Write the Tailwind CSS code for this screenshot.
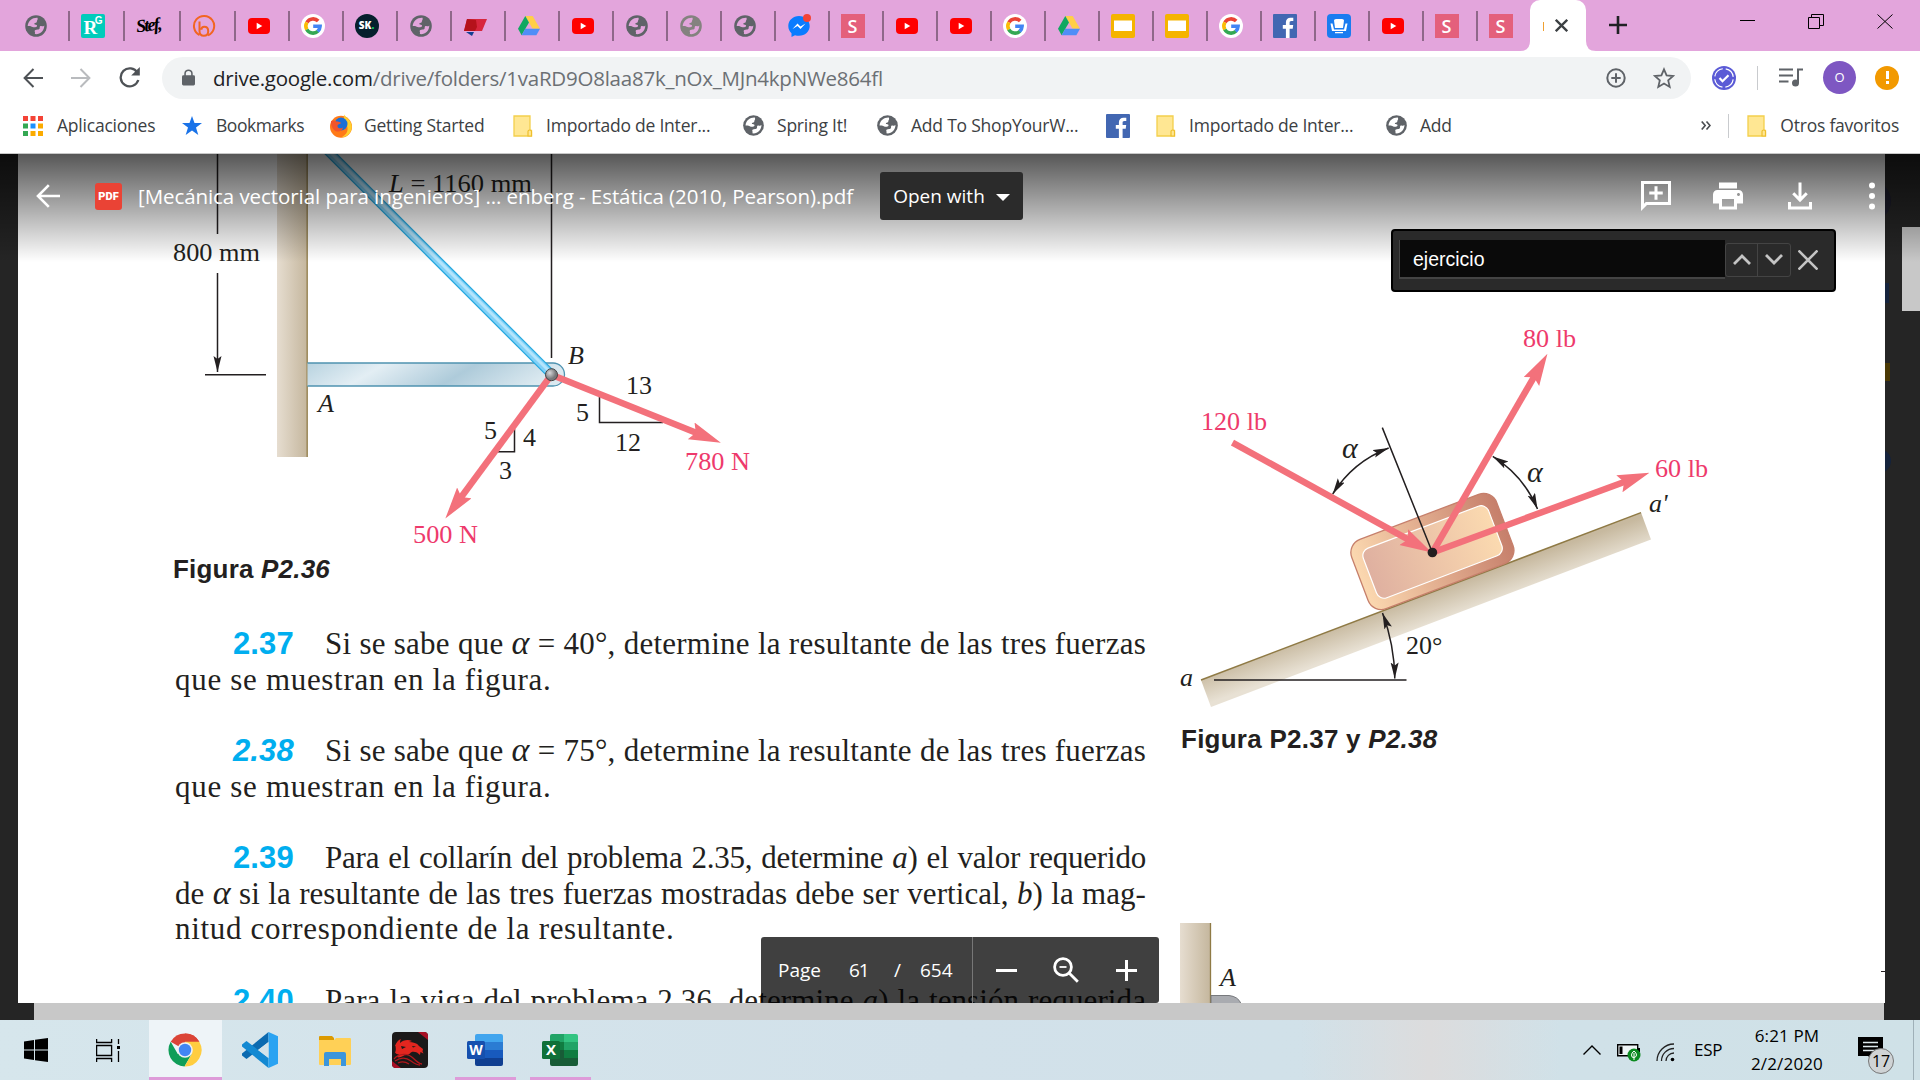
<!DOCTYPE html>
<html lang="es">
<head>
  <meta charset="UTF-8" />
  <meta name="viewport" content="width=device-width, initial-scale=1.0">
  <title>[Mecánica vectorial para ingenieros] - Google Drive</title>
  <script src="https://cdn.jsdelivr.net/npm/@tailwindcss/browser@4"></script>
</head>
<body class="w-[1920px] h-[1080px] overflow-hidden flex flex-col bg-[#252525] font-['Open_Sans','Noto_Sans',sans-serif]">

  <!-- Shared icons -->
  <svg class="hidden">
    <symbol id="globe" viewBox="0 0 24 24">
      <circle cx="12" cy="12" r="10.800" fill="currentColor" />
      <path d="M13.500 3.800C8.500 3.500 4 7 3.700 12c2.500-.2 3.500.3 4.800 1 1.500.6 3.800.5 4.500-.7.5-1.200-.8-1.600-2-1.800-1-.2-.9-1.300.1-1.500 1.200-.2 1.800-.5 1.800-1.800.1-1.200 1.300-1.200.6-3.400z" fill="#e3a5dc" />
      <path d="M20.300 11.500c-1 1-2 .9-3 .6-1-.2-1.800.5-1.600 1.600.2 1-.8 1.800-2 1.900-1.800.1-3.300.5-3 1.800.4 1 .5 1.700 0 2.700 5 .9 9.600-3.200 9.600-8.600z" fill="#e3a5dc" />
    </symbol>
    <symbol id="globew" viewBox="0 0 24 24">
      <circle cx="12" cy="12" r="10.800" fill="#5f6368" />
      <path d="M13.500 3.800C8.500 3.500 4 7 3.700 12c2.500-.2 3.500.3 4.800 1 1.500.6 3.800.5 4.500-.7.5-1.200-.8-1.600-2-1.800-1-.2-.9-1.300.1-1.500 1.200-.2 1.800-.5 1.800-1.800.1-1.200 1.300-1.200.6-3.400z" fill="#fff" />
      <path d="M20.300 11.500c-1 1-2 .9-3 .6-1-.2-1.800.5-1.600 1.600.2 1-.8 1.800-2 1.900-1.800.1-3.300.5-3 1.800.4 1 .5 1.700 0 2.700 5 .9 9.600-3.200 9.600-8.600z" fill="#fff" />
    </symbol>
    <symbol id="youtube" viewBox="0 0 24 24">
      <rect x="1" y="4" width="22" height="16" rx="4" fill="#f00" />
      <path d="M9.700 8.800v6.400l5.600-3.200z" fill="#fff" />
    </symbol>
    <symbol id="google" viewBox="0 0 24 24">
      <circle cx="12" cy="12" r="12" fill="#fff" />
      <g fill="none" stroke-width="3.600">
        <path d="M5.900 8.400A7.100 7.100 0 0 1 17.200 7.100" stroke="#ea4335" />
        <path d="M5.800 15.500A7.100 7.100 0 0 1 5.900 8.400" stroke="#fbbc05" />
        <path d="M16.900 17.200A7.100 7.100 0 0 1 5.800 15.500" stroke="#34a853" />
        <path d="M12.200 12.200h6.900a7.100 7.100 0 0 1-2.400 5.100" stroke="#4285f4" />
      </g>
    </symbol>
    <symbol id="drive" viewBox="0 0 24 24">
      <path d="M8.300 2h7.400l7.300 12.700h-7.400z" fill="#ffcf48" />
      <path d="M8.300 2l3.700 6.400-7.400 12.800L1 14.700z" fill="#11a861" />
      <path d="M8.300 14.700H23l-3.600 6.500H4.600z" fill="#4f8ef7" />
    </symbol>
    <symbol id="slides" viewBox="0 0 24 24">
      <rect width="24" height="24" rx="2" fill="#f5b400" />
      <rect x="3" y="6.500" width="18" height="10.500" fill="#fff" />
    </symbol>
    <symbol id="facebook" viewBox="0 0 24 24">
      <rect width="24" height="24" rx="1" fill="#4267b2" />
      <path d="M16.600 24v-9.300h3.100l.5-3.600h-3.600V8.800c0-1 .3-1.800 1.800-1.800h1.900V3.800c-.3 0-1.500-.1-2.800-.1-2.800 0-4.600 1.700-4.600 4.700v2.700H9.800v3.600h3.100V24z" fill="#fff" />
    </symbol>
    <symbol id="folder" viewBox="0 0 20 24">
      <path d="M1 2h16v14.500h1.500V22H1z" fill="#ffe793" stroke="#f3cf4c" stroke-width="1.300" />
      <path d="M15 22v-4.500q0-1.500 1.700-1.500T18.500 17.500V22z" fill="#ffe793" stroke="#eebf2c" stroke-width="1.200" />
    </symbol>
  </svg>

  <!-- Tab strip -->
  <div class="h-[51px] shrink-0 bg-[#e3a5dc] flex items-stretch text-[#5f6368]">
    <div class="w-[69.500px] pl-[24px] flex items-center relative"><svg class="size-6"><use href="#globe" /></svg><i class="absolute right-0 top-[11px] h-[30px] w-[1.500px] bg-[#8f688a]"></i></div>
    <div class="w-[55px] pl-[11px] flex items-center relative">
      <div class="size-6 bg-[#00ccbb] rounded-xs text-white font-bold font-['Liberation_Serif',serif] text-[19px] leading-[27px] pl-[3px] relative">R<span class="absolute right-[2px] top-[1px] text-[10px] leading-[12px] font-['Liberation_Sans',sans-serif]">G</span></div>
      <i class="absolute right-0 top-[11px] h-[30px] w-[1.500px] bg-[#8f688a]"></i>
    </div>
    <div class="w-[56px] pl-[11px] flex items-center relative"><span class="text-black italic text-[18px] tracking-[-1.800px] font-semibold font-['Liberation_Serif',serif] -rotate-6">Stef,</span><i class="absolute right-0 top-[11px] h-[30px] w-[1.500px] bg-[#8f688a]"></i></div>
    <div class="w-[55px] pl-[11px] flex items-center relative">
      <svg class="size-6" viewBox="0 0 24 24" fill="none" stroke="#f26522" stroke-width="2"><path d="M7.500 21A10.100 10.100 0 1 1 16 21.300" /><path d="M7.500 7.500V17c0 3 1.500 4.800 4.300 4.800 2.800 0 4.400-2 4.400-4.600s-1.600-4.400-4-4.400c-1.600 0-2.800 1-2.800 3" /></svg>
      <i class="absolute right-0 top-[11px] h-[30px] w-[1.500px] bg-[#8f688a]"></i>
    </div>
    <div id="tabs" class="flex"></div>
    <div class="w-[52.500px] pl-[11px] flex items-center"><div class="size-6 bg-[#e4607c] text-white font-semibold text-[18px] leading-6 text-center">S</div></div>
    <!-- Active tab -->
    <div class="w-[56px] bg-white rounded-t-[10px] flex items-center relative pl-[13px] gap-[11px]">
      <svg class="absolute -left-[10px] bottom-0 size-[10px]" viewBox="0 0 10 10"><path d="M10 0v10H0Q10 10 10 0z" fill="#fff" /></svg>
      <svg class="absolute -right-[10px] bottom-0 size-[10px]" viewBox="0 0 10 10"><path d="M0 0v10h10Q0 10 0 0z" fill="#fff" /></svg>
      <span class="w-px h-[9px] mt-[2px] bg-[#f0a030]"></span>
      <svg class="size-[13px]" viewBox="0 0 13 13" stroke="#3c4043" stroke-width="2.300"><path d="M.8.800l11.400 11.400M12.200.800L.8 12.200" /></svg>
    </div>
    <svg class="size-[18px] ml-[23px] mt-[16px]" viewBox="0 0 18 18" stroke="#202124" stroke-width="2.600"><path d="M9 0v18M0 9h18" /></svg>
    <div class="flex ml-[113px] mt-[14px] gap-[53px]">
      <svg class="w-[15px] h-[15px]" viewBox="0 0 15 15" stroke="#000" stroke-width="1"><path d="M0 6.500h15" /></svg>
      <svg class="w-[16px] h-[15px]" viewBox="0 0 16 15" stroke="#000" fill="none"><path d="M.5 3.500h11v11H.5zM3.500 3V.500h12v11H12" /></svg>
      <svg class="w-[16px] h-[15px]" viewBox="0 0 16 15" stroke="#000"><path d="M.5.500l15 14M15.500.500l-15 14" /></svg>
    </div>
  </div>

  <!-- Address bar -->
  <div class="h-[53px] shrink-0 bg-white flex items-center text-[#5f6368]">
    <div class="flex items-center w-[162px] pl-[23px] gap-[28px]">
      <svg class="size-[20px]" viewBox="0 0 20 20" fill="none" stroke="#4e5256" stroke-width="2"><path d="M20 10H2M10.500 1L1.600 10l8.900 9" /></svg>
      <svg class="size-[20px]" viewBox="0 0 20 20" fill="none" stroke="#b9bbbe" stroke-width="2"><path d="M0 10h18M9.500 1l8.900 9-8.900 9" /></svg>
      <svg class="size-[21px]" viewBox="0 0 21 21" fill="none" stroke="#4e5256" stroke-width="2.300"><path d="M18.500 5.800A9 9 0 1 0 19.300 13" /><path d="M20.800 0v8.600h-8.600z" fill="#4e5256" stroke="none" /></svg>
    </div>
    <div class="w-[1529px] h-[42px] rounded-full bg-[#f1f3f4] flex items-center pl-[20px]">
      <svg class="w-[13px] h-[17px]" viewBox="0 0 14 17"><rect y="6" width="14" height="11" rx="1.500" fill="#5f6368" /><path d="M3.300 7V4.300a3.700 3.700 0 0 1 7.400 0V7" fill="none" stroke="#5f6368" stroke-width="1.700" /></svg>
      <div class="ml-[18px] pt-px text-[20.500px] tracking-[-0.230px] text-[#6c7074] whitespace-nowrap"><span class="text-[#202124]">drive.google.com</span>/drive/folders/1vaRD9O8laa87k_nOx_MJn4kpNWe864fl</div>
      <svg class="size-[20px] ml-auto" viewBox="0 0 20 20" fill="none" stroke="#5f6368" stroke-width="2"><circle cx="10" cy="10" r="8.700" /><path d="M10 5.300v9.400M5.300 10h9.400" /></svg>
      <svg class="size-[22px] ml-[27px] mr-[16px]" viewBox="0 0 22 22" fill="none" stroke="#5f6368" stroke-width="1.800"><path d="M11 2.300l2.600 6.100 6.600.6-5 4.400 1.500 6.500-5.700-3.400-5.700 3.400 1.500-6.500-5-4.400 6.600-.6z" /></svg>
    </div>
    <svg class="size-6 ml-[21px]" viewBox="0 0 24 24"><circle cx="12" cy="12" r="12" fill="#5b5bd6" /><circle cx="12" cy="12" r="9.300" fill="none" stroke="#fff" stroke-width="1.200" stroke-dasharray="11.600 3" stroke-dashoffset="-1.500" /><path d="M7.500 12l3 3.200 6-6" fill="none" stroke="#fff" stroke-width="2.200" /></svg>
    <i class="w-px h-6 bg-[#c9cbce] ml-[21px]"></i>
    <svg class="w-[24px] h-[19px] ml-[21px]" viewBox="0 0 24 19" stroke="#5f6368" stroke-width="2" fill="none"><path d="M0 1.500h14M0 7.500h14M0 13.500h9.500M19 15V1.500h5" /><circle cx="16.500" cy="15" r="3.500" fill="#5f6368" stroke="none" /></svg>
    <div class="size-[33px] rounded-full bg-[#7e57c2] text-white text-[13px] leading-[32px] text-center ml-[20px]">O</div>
    <div class="size-6 rounded-full bg-[#f29900] ml-[19px] flex flex-col items-center justify-center gap-[2px]"><i class="w-[3px] h-[8px] bg-white"></i><i class="size-[3px] bg-white"></i></div>
  </div>

  <!-- Bookmarks bar -->
  <div class="h-[50px] shrink-0 bg-white border-b border-[#c8c8c8] flex items-center pl-[23px] pb-[6px] text-[17.500px] tracking-[-0.220px] text-[#3c4043] whitespace-nowrap">
    <div class="w-[159px] flex items-center gap-[14px]">
      <svg class="size-[20px]" viewBox="0 0 20 20"><path d="M0 0h5v5H0zM7.500 0h5v5h-5zM15 0h5v5h-5z" fill="#f44336" /><path d="M0 7.500h5v5H0zM0 15h5v5H0z" fill="#34a853" /><path d="M7.500 7.500h5v5h-5z" fill="#1a90ff" /><path d="M15 7.500h5v5h-5zM7.500 15h5v5h-5zM15 15h5v5h-5z" fill="#fbab00" /></svg>
      <span>Aplicaciones</span>
    </div>
    <div class="w-[147px] flex items-center gap-[14px]">
      <svg class="size-[20px]" viewBox="0 0 20 20"><path d="M10 0l2.500 7H20l-6 4.600L16.300 19 10 14.500 3.700 19 6 11.600 0 7h7.500z" fill="#1a73e8" /></svg>
      <span class="tracking-[-0.450px]">Bookmarks</span>
    </div>
    <div class="w-[184px] flex items-center gap-[11px]">
      <svg class="size-6" viewBox="0 0 24 24"><circle cx="12" cy="12.800" r="11" fill="#ff7a18" /><path d="M15 .5c1 3 7 4.500 7.800 11.500.4 6-4.300 11.300-10.300 11.300 4-2 6.500-5 6-9.300C18 9 14 6 15 .5z" fill="#ffd02e" /><circle cx="12" cy="10" r="6.500" fill="#1b6fd6" /><path d="M2 7c2-1 4-.5 5.500.5 2 0 3.500.5 4.500 1.500-1 1.500-3.500 1-3.500 3 0 2.500 3 3 5.500 1.500-.5 3-3 4.500-6 4S1.500 13 2 7z" fill="#f2552b" /></svg>
      <span>Getting Started</span>
    </div>
    <div class="w-[229px] flex items-center gap-[13px]"><svg class="w-[20px] h-[24px]"><use href="#folder" /></svg><span>Importado de Inter...</span></div>
    <div class="w-[134px] flex items-center gap-[12px]"><svg class="size-[23px]"><use href="#globew" /></svg><span>Spring It!</span></div>
    <div class="w-[230px] flex items-center gap-[12px]"><svg class="size-[23px]"><use href="#globew" /></svg><span>Add To ShopYourW...</span></div>
    <div class="w-[50px]"><svg class="size-6"><use href="#facebook" /></svg></div>
    <div class="w-[229px] flex items-center gap-[13px]"><svg class="w-[20px] h-[24px]"><use href="#folder" /></svg><span>Importado de Inter...</span></div>
    <div class="flex items-center gap-[12px]"><svg class="size-[23px]"><use href="#globew" /></svg><span>Add</span></div>
    <div class="ml-auto flex items-center mr-[21px]">
      <svg class="w-[10px] h-[9px]" viewBox="0 0 10 9" fill="none" stroke="#4a4d51" stroke-width="1.600"><path d="M.7.500l3.500 4-3.500 4M5.500.500l3.500 4-3.500 4" /></svg>
      <i class="w-px h-6 bg-[#c9cbce] ml-[17px]"></i>
      <svg class="w-[20px] h-[24px] ml-[18px] mr-[13px]"><use href="#folder" /></svg>
      <span>Otros favoritos</span>
    </div>
  </div>

  <!-- PDF viewer -->
  <main class="h-[866px] shrink-0 relative bg-[#252525] overflow-hidden">
    <div class="ml-[18px] w-[1867px] h-[849px] bg-white flex overflow-hidden text-[#231f20]">

      <!-- Left column -->
      <div class="w-[1147px] shrink-0">
        <svg class="block w-[1147px] h-[400px]" viewBox="18 154 1147 400" font-family="Liberation Serif, serif" font-size="26" fill="#231f20">
          <defs>
            <linearGradient id="wall"><stop offset="0" stop-color="#e6ddd0" /><stop offset="1" stop-color="#c5b79e" /></linearGradient>
            <linearGradient id="beam" x2="1" y2=".15"><stop offset="0" stop-color="#b8d3e0" /><stop offset=".3" stop-color="#e3eef4" /><stop offset=".65" stop-color="#aecbda" /><stop offset="1" stop-color="#dbe9f0" /></linearGradient>
            <radialGradient id="pin" cx=".35" cy=".35"><stop offset="0" stop-color="#d8d8da" /><stop offset="1" stop-color="#77787b" /></radialGradient>
            <marker id="force" markerUnits="userSpaceOnUse" markerWidth="32" markerHeight="20" refX="8" refY="9" orient="auto"><path d="M0 0L32 9 0 18 5 9z" fill="#f3717b" /></marker>
            <marker id="tip" markerUnits="userSpaceOnUse" markerWidth="18" markerHeight="10" refX="16" refY="4" orient="auto-start-reverse"><path d="M0 0L16 4 0 8 3 4z" fill="#231f20" /></marker>
          </defs>
          <g stroke="#231f20" stroke-width="1.500" fill="none">
            <path d="M217.500 154v80M551.500 154v204" />
            <path d="M217.500 273v99" marker-end="url(#tip)" />
            <path d="M205 374.700h61" />
          </g>
          <rect x="277" y="154" width="30" height="303" fill="url(#wall)" />
          <path d="M307.200 154v303" stroke="#8f7a45" stroke-width="1.300" />
          <path d="M307.500 363H553a11.500 11.500 0 0 1 0 23H307.500" fill="url(#beam)" stroke="#4f93b0" stroke-width="1.300" />
          <path d="M311 134L551 374" stroke="#25a8de" stroke-width="9.500" />
          <path d="M311 134L551 374" stroke="#7fd0f7" stroke-width="7" />
          <path d="M311.500 133.500L551.500 373.500" stroke="#b4e5fc" stroke-width="3" />
          <g stroke="#231f20" stroke-width="1.500" fill="none">
            <path d="M599.500 396v26.500H663" />
            <path d="M514.500 429v22.700H497" />
          </g>
          <g stroke="#f3717b" stroke-width="6.500">
            <path d="M551.500 374.700L698.600 433.800" marker-end="url(#force)" />
            <path d="M551.500 374.700L459.600 499.300" marker-end="url(#force)" />
          </g>
          <circle cx="551.500" cy="374.700" r="6" fill="url(#pin)" stroke="#444" stroke-width="1" />
          <text x="173" y="261" textLength="87" lengthAdjust="spacingAndGlyphs">800 mm</text>
          <text x="389" y="192" textLength="143" lengthAdjust="spacingAndGlyphs"><tspan font-style="italic">L</tspan> = 1160 mm</text>
          <text x="568" y="364" font-style="italic">B</text>
          <text x="318" y="412" font-style="italic">A</text>
          <text x="626" y="394">13</text>
          <text x="576" y="421">5</text>
          <text x="615" y="451">12</text>
          <text x="484" y="439">5</text>
          <text x="523" y="446">4</text>
          <text x="499" y="479">3</text>
          <g fill="#ee3a6c">
            <text x="685" y="470" textLength="65" lengthAdjust="spacingAndGlyphs">780 N</text>
            <text x="413" y="543" textLength="65" lengthAdjust="spacingAndGlyphs">500 N</text>
          </g>
        </svg>
        <p class="pl-[155px] h-[30px] leading-[30px] text-[26px] font-bold tracking-[0.200px] font-['Liberation_Sans',sans-serif]">Figura <i>P2.36</i></p>

        <div class="ml-[157px] mt-[42px] w-[971px] font-['Liberation_Serif',serif] text-[31px] leading-[35.650px] tracking-[0.250px] whitespace-nowrap">
          <div class="flex pl-[58px]"><b class="w-[92px] shrink-0 tracking-[0.100px] text-[#00aeef] font-['Liberation_Sans',sans-serif]">2.37</b><span class="flex-1 [text-align-last:justify]">Si se sabe que <i class="text-[34px] leading-none">α</i> = 40°, determine la resultante de las tres fuerzas</span></div>
          <div class="mb-[35.650px] tracking-[0.690px]">que se muestran en la figura.</div>
          <div class="flex pl-[58px]"><b class="w-[92px] shrink-0 tracking-[0.100px] italic text-[#00aeef] font-['Liberation_Sans',sans-serif]">2.38</b><span class="flex-1 [text-align-last:justify]">Si se sabe que <i class="text-[34px] leading-none">α</i> = 75°, determine la resultante de las tres fuerzas</span></div>
          <div class="mb-[35.650px] tracking-[0.690px]">que se muestran en la figura.</div>
          <div class="flex pl-[58px] tracking-[-0.200px]"><b class="w-[92px] shrink-0 tracking-[0.100px] text-[#00aeef] font-['Liberation_Sans',sans-serif]">2.39</b><span class="flex-1 [text-align-last:justify]">Para el collarín del problema 2.35, determine <i>a</i>) el valor requerido</span></div>
          <div class="[text-align-last:justify] tracking-[0.050px]">de <i class="text-[34px] leading-none">α</i> si la resultante de las tres fuerzas mostradas debe ser vertical, <i>b</i>) la mag-</div>
          <div class="mb-[35.650px] tracking-[0.690px]">nitud correspondiente de la resultante.</div>
          <div class="flex pl-[58px] tracking-[0.100px]"><b class="w-[92px] shrink-0 text-[#00aeef] font-['Liberation_Sans',sans-serif]">2.40</b><span class="flex-1 [text-align-last:justify]">Para la viga del problema 2.36, determine <i>a</i>) la tensión requerida</span></div>
        </div>
      </div>

      <!-- Right column -->
      <div class="w-[720px] shrink-0">
        <svg class="block w-[720px] h-[570px]" viewBox="1165 154 720 570" font-family="Liberation Serif, serif" font-size="26" fill="#231f20">
          <defs>
            <linearGradient id="ramp" gradientUnits="userSpaceOnUse" x1="1421" y1="596" x2="1431" y2="624"><stop offset="0" stop-color="#c7b99f" /><stop offset="1" stop-color="#e8e1d4" /></linearGradient>
            <linearGradient id="block"><stop offset="0" stop-color="#fbd8b0" /><stop offset="1" stop-color="#c67f6b" /></linearGradient>
            <linearGradient id="face"><stop offset="0" stop-color="#dfb0a0" /><stop offset="1" stop-color="#fbdab0" /></linearGradient>
          </defs>
          <path d="M1201 680L1641 512.600 1651 539.500 1211 707z" fill="url(#ramp)" />
          <path d="M1201 680L1641 512.600" stroke="#8f7a45" stroke-width="1.500" />
          <g transform="translate(1432.400 551.500) rotate(-20.800)">
            <rect x="-77.500" y="-37" width="155" height="74" rx="14" fill="url(#block)" stroke="#c67f6b" stroke-width="1.300" />
            <rect x="-67" y="-26" width="134" height="53" rx="8" fill="url(#face)" stroke="#fff" stroke-width="1.200" />
          </g>
          <g stroke="#231f20" stroke-width="1.500" fill="none">
            <path d="M1214 680h192.500M1432.400 552.500L1382.300 427.600" />
            <path d="M1332.700 494A114 114 0 0 1 1388.700 448" marker-start="url(#tip)" marker-end="url(#tip)" />
            <path d="M1492.800 456.400A114 114 0 0 1 1537.500 509" marker-start="url(#tip)" marker-end="url(#tip)" />
            <path d="M1382.500 613A193 193 0 0 1 1394.800 678.500" marker-start="url(#tip)" marker-end="url(#tip)" />
          </g>
          <g stroke="#f3717b" stroke-width="6.500">
            <path d="M1432.400 552.500L1535.400 374.600" marker-end="url(#force)" />
            <path d="M1432.400 552.500L1626.900 481" marker-end="url(#force)" />
            <path d="M1232.500 442.600L1410.700 540.900" marker-end="url(#force)" />
          </g>
          <circle cx="1432.400" cy="552.500" r="4.800" />
          <g fill="#ee3a6c">
            <text x="1523" y="347" textLength="53" lengthAdjust="spacingAndGlyphs">80 lb</text>
            <text x="1201" y="430" textLength="66" lengthAdjust="spacingAndGlyphs">120 lb</text>
            <text x="1655" y="477" textLength="53" lengthAdjust="spacingAndGlyphs">60 lb</text>
          </g>
          <text x="1342" y="458" font-style="italic" font-size="30">α</text>
          <text x="1527" y="482" font-style="italic" font-size="30">α</text>
          <text x="1649" y="512" font-style="italic">a'</text>
          <text x="1180" y="686" font-style="italic">a</text>
          <text x="1406" y="653.500">20°</text>
        </svg>
        <p class="pl-[16px] h-[30px] leading-[30px] text-[26px] font-bold tracking-[0.250px] font-['Liberation_Sans',sans-serif]">Figura P2.37 y <i>P2.38</i></p>
        <svg class="block w-[720px] h-[249px]" viewBox="1165 754 720 249" font-family="Liberation Serif, serif" font-size="26" fill="#231f20">
          <rect x="1180" y="923" width="30" height="80" fill="url(#wall)" />
          <path d="M1210.500 923v80" stroke="#8f7a45" stroke-width="1.300" />
          <path d="M1211 995.500h18q9 1 12 8h-30z" fill="#a9abb0" stroke="#77797d" />
          <text x="1220" y="986" font-style="italic">A</text>
          <path d="M1881 971.500h4" stroke="#231f20" />
        </svg>
      </div>
    </div>

    <div class="ml-[34px] w-[1850px] h-[17px] bg-[#c8c8c8]"></div>
    <div class="absolute right-0 top-[73px] w-[18px] h-[84px] bg-[#c8c8c8]"></div>

    <!-- Dimmed Drive side panel -->
    <div class="absolute left-[1885px] top-0 w-[7px] h-[600px] overflow-hidden">
      <i class="absolute -left-[34px] top-[27px] size-[40px] rounded-full bg-[#1c1c2c]"></i>
      <i class="absolute left-0 top-[129px] w-[4px] h-[20px] bg-[#15233c]"></i>
      <i class="absolute left-0 top-[209px] w-[5px] h-[18px] bg-[#4a3905]"></i>
      <i class="absolute -left-[18px] top-[295px] size-[24px] rounded-full bg-[#15233c]"></i>
    </div>

    <!-- Viewer header -->
    <header class="absolute inset-x-0 top-0 h-[108px] bg-linear-to-b from-black/66 to-black/0">
      <div class="h-[84px] flex items-center text-white">
        <svg class="w-[24px] h-[24px] ml-[36px]" viewBox="0 0 24 24" fill="none" stroke="#fff" stroke-width="2.600"><path d="M24 12H2.500M12.800 1.200L2 12l10.800 10.800" /></svg>
        <div class="size-[27px] ml-[35px] rounded-[3px] bg-[#ea4335] text-[11px] font-black leading-[27px] text-center font-['Roboto',sans-serif]">PDF</div>
        <div class="ml-[16px] w-[742px] text-[20.500px] tracking-[-0.070px] whitespace-nowrap font-['Open_Sans',sans-serif]">[Mecánica vectorial para ingenieros] ... enberg - Estática (2010, Pearson).pdf</div>
        <div class="w-[143px] h-[48px] shrink-0 rounded-[3px] bg-[#2b2b2b] flex items-center justify-center gap-[11px] text-[19px] font-medium whitespace-nowrap">Open with <svg class="w-[14px] h-[7px] mt-[3px]" viewBox="0 0 14 7"><path d="M0 0h14L7 7z" fill="#fff" /></svg></div>
        <div class="ml-auto mr-[30px] flex items-center gap-[36px]">
          <svg class="size-9" viewBox="0 0 24 24" fill="#fff"><path d="M2 2h20v16H6l-4 4zM4 4v13.200L5.200 16H20V4zM11 5.500h2V9h3.500v2H13v3.500h-2V11H7.500V9H11z" fill-rule="evenodd" /></svg>
          <svg class="size-9" viewBox="0 0 24 24" fill="#fff"><path d="M19 8H5c-1.660 0-3 1.340-3 3v6h4v4h12v-4h4v-6c0-1.660-1.340-3-3-3zm-3 11H8v-5h8v5zm3-7c-.550 0-1-.450-1-1s.450-1 1-1 1 .450 1 1-.450 1-1 1zm-1-9H6v4h12V3z" /></svg>
          <svg class="size-9" viewBox="0 0 24 24" fill="none" stroke="#fff" stroke-width="2"><path d="M12 3v11M7.500 10.200L12 14.700l4.500-4.500M5 16v4h14v-4" /></svg>
          <svg class="size-9" viewBox="0 0 24 24" fill="#fff"><circle cx="12" cy="5" r="2" /><circle cx="12" cy="12" r="2" /><circle cx="12" cy="19" r="2" /></svg>
        </div>
      </div>
    </header>

    <!-- Find box -->
    <div class="absolute left-[1391px] top-[75px] w-[445px] h-[63px] rounded-[4px] border-2 border-black bg-[#2a2a2a] flex items-center pl-[6px] pb-[2px]">
      <div class="w-[326px] h-[39px] bg-[#0a0a0a] border-l border-b-2 border-[#444] text-white text-[19.500px] leading-[39px] pl-[13px] font-['Liberation_Sans',sans-serif]">ejercicio</div>
      <div class="flex h-[34px] rounded-[3px] border border-[#444] divide-x divide-[#444]">
        <span class="w-[32px] flex items-center justify-center"><svg class="w-[18px] h-[11px]" viewBox="0 0 18 11" fill="none" stroke="#c4c4c4" stroke-width="2.800"><path d="M1 10l8-8 8 8" /></svg></span>
        <span class="w-[32px] flex items-center justify-center"><svg class="w-[18px] h-[11px]" viewBox="0 0 18 11" fill="none" stroke="#c4c4c4" stroke-width="2.800"><path d="M1 1l8 8 8-8" /></svg></span>
      </div>
      <svg class="size-[20px] ml-[7px]" viewBox="0 0 20 20" stroke="#c4c4c4" stroke-width="2.600"><path d="M.5.500l19 19M19.500.500l-19 19" /></svg>
    </div>

    <!-- Page controls -->
    <div class="absolute left-[761px] top-[783px] w-[398px] h-[66px] rounded-[3px] bg-black/75 text-white text-[19px] flex items-stretch">
      <div class="w-[212px] flex items-center border-r border-[#777] font-medium">
        <span class="ml-[17px] w-[71px]">Page</span><span class="w-[45px] tracking-[-1px]">61</span><span class="w-[26px]">/</span><span>654</span>
      </div>
      <div class="flex items-center pl-[23px] gap-[36px]">
        <svg class="w-[21px] h-[21px]" viewBox="0 0 21 21" stroke="#fff" stroke-width="3"><path d="M0 10.500h21" /></svg>
        <svg class="w-[26px] h-[26px]" viewBox="0 0 26 26" fill="none" stroke="#fff" stroke-width="2.800"><circle cx="10" cy="10" r="8.400" /><path d="M15.800 15.800l9 9" /><path d="M6.500 10h7" stroke-width="1.800" /></svg>
        <svg class="w-[21px] h-[21px] ml-px" viewBox="0 0 21 21" stroke="#fff" stroke-width="3"><path d="M0 10.500h21M10.500 0v21" /></svg>
      </div>
    </div>
  </main>

  <!-- Taskbar -->
  <footer class="h-[60px] shrink-0 flex items-center bg-linear-to-r from-[#d6e6ec] via-[#d2e1ea] to-[#cfe1e7] text-black relative">
    <div class="absolute left-[1300px] top-0 w-[260px] h-full bg-linear-to-r from-[#dcdcdd]/0 via-[#dcdcdd] to-[#dcdcdd]/0"></div>
    <div class="w-[149px] flex items-center pl-[24px] gap-[48px]">
      <svg class="size-6" viewBox="0 0 24 24"><path d="M0 3.500L10 2v9.500H0zM11 1.800L24 0v11.500H11zM0 12.500h10V22L0 20.500zM11 12.500h13V24l-13-1.800z" /></svg>
      <svg class="w-[24px] h-[23px]" viewBox="0 0 24 23" fill="none" stroke="#000" stroke-width="1.300"><path d="M.6 0v3.500h15V0M.6 23v-3.500h15V23M.6 6.500h15v10H.6zM22.500 0v5M22.500 12v11" /><path d="M21 7h3v3h-3z" fill="#000" stroke="none" /></svg>
    </div>
    <div class="w-[73px] h-full bg-[#eef4f8] border-b-[3px] border-[#de9bd9] flex items-center justify-center pt-[2px] pr-[2px]">
      <svg class="size-[34px]" viewBox="0 0 34 34">
        <path d="M17 17L2.700 8.700A16.500 16.500 0 0 1 31.300 8.700z" fill="#db4437" />
        <path d="M17 .5a16.500 16.500 0 0 1 14.300 8.200H17z" fill="#db4437" />
        <path d="M2.700 8.700A16.500 16.500 0 0 0 16.500 33.500l7.200-12.600L17 17 9.800 21z" fill="#0f9d58" />
        <path d="M31.300 8.700A16.500 16.500 0 0 1 16.500 33.500l7.300-12.600L17 17V8.700z" fill="#ffcd40" />
        <circle cx="17" cy="17" r="7.800" fill="#f1f1f1" /><circle cx="17" cy="17" r="6.200" fill="#4285f4" />
      </svg>
    </div>
    <svg class="size-9 ml-[20px]" viewBox="0 0 36 36"><path d="M26.500 0v10L4.500 27 0 23.500v-2z" fill="#0b6ab0" /><path d="M0 14.500v-2L4.500 9l22 17v10z" fill="#1389d2" /><path d="M26.500 0L36 4.300v27.400L26.500 36z" fill="#2aa3f2" /><path d="M26.500 10v16L16 18z" fill="#d3e3ea" /></svg>
    <svg class="w-[32px] h-[31px] ml-[41px]" viewBox="0 0 32 31"><path d="M0 5V2q0-1 1-1h12l2 2v2z" fill="#dc9a00" /><path d="M0 5h15l2-2h14q1 0 1 1v25q0 1-1 1H1q-1 0-1-1z" fill="#ffd056" /><path d="M5 31V19q0-2 2-2h18q2 0 2 2v12h-5v-7H10v7z" fill="#3c96dc" /></svg>
    <svg class="size-9 ml-[41px]" viewBox="0 0 36 36"><rect width="36" height="36" rx="4" fill="#1b1919" /><path d="M26 0h6q4 0 4 4v4zM0 29l9 7H4q-4 0-4-4z" fill="#a80f24" /><path d="M3 14c1-3 3-6 6-7-1 2-1 3-1 4 3-3 8-4 12-2l-3 1c4 0 8 1 10 4l4 3-.5 2.500 1 2-3-1.500-.5 3-3-2.500c-3-1-6-1-7 1-2 2-5 1-7 2.500-2 1-4 2-6 1l2-2.500c-2 0-3-1-4-2 1-2 1-3 .5-6.500z" fill="#e3261f" /><path d="M9 14l5 1-4 2zM20 14l4 .5-3 1z" fill="#1b1919" /><path d="M2 27c5-6 14-6 19-1 4 4 6 6 9 6M3 29c6-4 12-3 16 0 4 3 6 4 9 4M6 31c4-2 8-1 11 1" fill="none" stroke="#b5181c" stroke-width="1.300" /></svg>
    <div class="ml-[27px] w-[61px] h-full border-b-[3px] border-[#de9bd9] flex items-center pl-[12px] pt-[3px]">
      <svg class="w-[36px] h-[32px]" viewBox="0 0 36 32"><path d="M8 2q0-2 2-2h24q2 0 2 2v6H8z" fill="#41a5ee" /><path d="M8 8h28v8H8z" fill="#2b7cd3" /><path d="M8 16h28v8H8z" fill="#185abd" /><path d="M8 24h28v6q0 2-2 2H10q-2 0-2-2z" fill="#103f91" /><rect y="7" width="18" height="18" rx="1.500" fill="#1650ae" /><text x="9" y="21" font-size="14" font-weight="700" text-anchor="middle" fill="#fff" font-family="Open Sans">W</text></svg>
    </div>
    <div class="ml-[14px] w-[61px] h-full border-b-[3px] border-[#de9bd9] flex items-center pl-[12px] pt-[3px]">
      <svg class="w-[36px] h-[32px]" viewBox="0 0 36 32"><path d="M8 2q0-2 2-2h12v8H8z" fill="#21a366" /><path d="M22 0h12q2 0 2 2v6H22z" fill="#33c481" /><path d="M8 8h14v8H8z" fill="#107c41" /><path d="M22 8h14v8H22z" fill="#21a366" /><path d="M22 16h14v8H22z" fill="#107c41" /><path d="M8 16h14v8h14v6q0 2-2 2H10q-2 0-2-2z" fill="#185c37" /><rect y="7" width="18" height="18" rx="1.500" fill="#0f7038" /><text x="9" y="21" font-size="15" font-weight="700" text-anchor="middle" fill="#fff" font-family="Open Sans">X</text></svg>
    </div>
    <!-- System tray -->
    <div class="ml-auto flex items-center relative text-[17px] tracking-[-0.100px]">
      <svg class="w-[18px] h-[10px]" viewBox="0 0 18 10" fill="none" stroke="#000" stroke-width="1.400"><path d="M.5 9.500L9 1l8.500 8.500" /></svg>
      <svg class="w-[24px] h-[18px] ml-[16px] mt-[6px]" viewBox="0 0 24 18"><path d="M.7.700h20v11H.7z" fill="#eef4f6" stroke="#000" stroke-width="1.400" /><path d="M2.500 2.500h3v7.500h-3zM21 4h2v4h-2z" /><circle cx="17" cy="11" r="6.500" fill="#0a8a1f" /><path d="M17 16V9M14.500 11q0-2 2.500-4 2.500 2 2.500 4t-2.500 2.500T14.500 11z" fill="none" stroke="#fff" /></svg>
      <svg class="size-[19px] ml-[15px] mt-[4px]" viewBox="0 0 19 19" fill="none" stroke="#222" stroke-width="1.300"><path d="M1 18A17 17 0 0 1 18 1M5.500 18A12.500 12.500 0 0 1 18 5.500M10 18a8 8 0 0 1 8-8" /><circle cx="16.500" cy="16.500" r="1.800" fill="#000" stroke="none" /></svg>
      <span class="ml-[19px] w-[45px] tracking-[-0.300px]">ESP</span>
      <div class="w-[96px] text-center leading-[28px] tracking-[0.150px]">6:21 PM<br>2/2/2020</div>
      <div class="relative ml-[23px] w-[38px] h-[44px]">
        <svg class="absolute left-0 top-[9px] w-[25px] h-[24px]" viewBox="0 0 25 24"><path d="M0 0h25v19h-9v5l-6-5H0z" /><path d="M5 5.500h15M5 9.500h15M5 13.500h15" stroke="#dde8ec" stroke-width="1.300" /></svg>
        <span class="absolute left-[10px] top-[20px] size-[26px] rounded-full bg-[#cfd3d5] border border-[#777] text-center leading-[24px] text-[16px] font-medium">17</span>
      </div>
      <i class="w-px h-[60px] bg-[#9fb0b8] ml-[17px] mr-[6px]"></i>
    </div>
  </footer>

  <script>
    const names = ["youtube", "google", "sk", "globe", "red", "drive", "youtube", "globe", "globe-light", "globe", "messenger", "s",
      "youtube", "youtube", "google", "drive", "slides", "slides", "google", "facebook", "chair", "youtube", "s"];

    const custom = {
      "sk": '<div class="size-6 rounded-full bg-[#06202d] text-white font-extrabold text-[10px] leading-[23px] text-center">SK<span class="text-[#13ce66]">.</span></div>',
      "s": '<div class="size-6 bg-[#e4607c] text-white font-semibold text-[18px] leading-6 text-center">S</div>',
      "red": '<svg class="size-6" viewBox="0 0 24 24"><path d="M4 5h20l-5 12H1z" fill="#d7263d"/><path d="M4 5l9 1 1 7-2 4H1z" fill="#b5121b"/><path d="M3 18h8l-2 4z" fill="#123f91"/></svg>',
      "globe-light": '<svg class="size-6 text-[#84827f]"><use href="#globe"/></svg>',
      "messenger": '<svg class="size-6" viewBox="0 0 24 24"><path d="M12 2C6 2 1.300 6.400 1.300 12c0 3 1.200 5.400 3.200 7.200V23l3.500-1.800c1.300.4 2.600.6 4 .6 6 0 10.700-4.300 10.700-9.800S18 2 12 2z" fill="#0a7cff"/><path d="M5.500 15l5-5.500 3 3 5-3-5 5.500-3-3z" fill="#fff"/><circle cx="20" cy="4" r="4" fill="#f44336"/></svg>',
      "chair": '<svg class="size-6" viewBox="0 0 24 24"><rect width="24" height="24" rx="4" fill="#1a7cf0"/><path d="M7 6.500Q7 5 9 5h6q2 0 2 1.500L16 14H8zM3.500 9.500h2L7 15.500h10l1.500-6h2L19 17H5zM8 18h8v1.200H8z" fill="#fff"/></svg>'
    };

    document.getElementById("tabs").innerHTML = names.map(n =>
      '<div class="w-[54px] pl-[11px] flex items-center relative">' +
      (custom[n] || '<svg class="size-6"><use href="#' + n + '"/></svg>') +
      '<i class="absolute right-0 top-[11px] h-[30px] w-[1.500px] bg-[#8f688a]"></i></div>'
    ).join("");
  </script>
</body>
</html>
